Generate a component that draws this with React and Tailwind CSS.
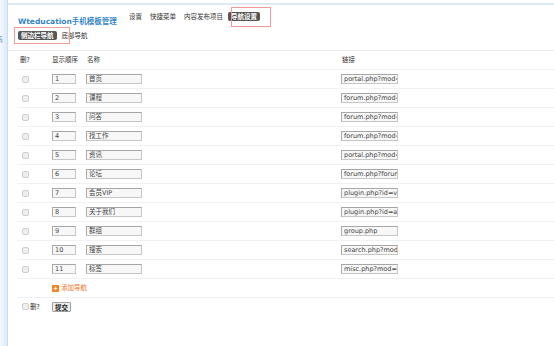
import React from 'react'

const CJK = '"Noto Sans CJK SC", "DejaVu Sans", sans-serif'
const LAT = '"DejaVu Sans", "Noto Sans CJK SC", sans-serif'

const rows = [
  { order: '1', name: '首页', link: 'portal.php?mod=index' },
  { order: '2', name: '课程', link: 'forum.php?mod=index' },
  { order: '3', name: '问答', link: 'forum.php?mod=forumdisplay' },
  { order: '4', name: '找工作', link: 'forum.php?mod=forumdisplay' },
  { order: '5', name: '资讯', link: 'portal.php?mod=list' },
  { order: '6', name: '论坛', link: 'forum.php?forumlist=1' },
  { order: '7', name: '会员VIP', link: 'plugin.php?id=vip' },
  { order: '8', name: '关于我们', link: 'plugin.php?id=about' },
  { order: '9', name: '群组', link: 'group.php' },
  { order: '10', name: '搜索', link: 'search.php?mod=forum' },
  { order: '11', name: '标签', link: 'misc.php?mod=tag' },
]

function Box() {
  return <span className="block w-[7px] h-[7px] rounded-[2px] border border-[#cfcfcf] bg-[#eeeeee]" />
}

function Field({ w, value }) {
  return (
    <div
      className={`${w} h-[10px] border border-[#c6c6c6] border-t-[#a6a6a6] border-l-[#aaaaaa] bg-[#f7f7f7] overflow-hidden whitespace-nowrap text-[6.5px] leading-[8px] pl-[2px] text-[#444]`}
      style={{ fontFamily: LAT }}
    >
      {value}
    </div>
  )
}

function Pill({ children }) {
  return (
    <span className="relative inline-block bg-[#555] text-white font-bold rounded-[2px] px-[3px] h-[9px] leading-[9px] text-[6.5px]">
      {children}
    </span>
  )
}

export default function App() {
  return (
    <div className="flex w-[554px] h-[346px] bg-white overflow-hidden text-[#333]" style={{ fontFamily: CJK }}>
      {/* side strip */}
      <div className="w-[8px] shrink-0 bg-gradient-to-r from-[#f4f9fe] to-[#dbeaf7] border-r border-[#c9def0] overflow-hidden pt-[35px]">
        <span className="block -ml-[4px] text-[7px] leading-[8px] text-[#4f87bd]">系</span>
      </div>

      <div className="flex-1 mt-[3px] border-t-2 border-[#dde9f4]">
        <div className="border-b border-[#e8eef4] h-[46px] pl-[10px]">
          <div className="flex items-center h-[23px]">
            <div className="w-[111px] font-bold text-[#3486c6] whitespace-nowrap">
              <span className="text-[7.5px]" style={{ fontFamily: LAT }}>Wteducation</span>
              <span className="text-[7.5px]">手机模板管理</span>
            </div>
            <div className="flex items-center text-[6.5px] whitespace-nowrap">
              <span className="mr-[8px]">设置</span>
              <span className="mr-[8px]">快捷菜单</span>
              <span className="mr-[5px]">内容发布项目</span>
              <span className="relative">
                <Pill>导航设置</Pill>
                <span className="absolute left-[3px] top-[-5px] w-[40px] h-[20px] border border-[#f29a9a]" />
              </span>
            </div>
          </div>
          <div className="flex items-center h-[15px] text-[6.5px] whitespace-nowrap">
            <span className="relative mr-[5px]">
              <Pill>侧边栏导航</Pill>
              <span className="absolute left-[-4px] top-[-4px] w-[56px] h-[17px] border border-[#f29a9a]" />
            </span>
            <span>底部导航</span>
          </div>
        </div>

        <div className="pl-[9px] text-[6.5px]">
          <div className="flex items-center h-[19px] border-b border-[#eef2f6]">
            <span className="w-[35px] pl-[3px]">删?</span>
            <span className="w-[34px]">显示顺序</span>
            <span className="w-[255px] pl-[1px]">名称</span>
            <span className="pl-[1px]">链接</span>
          </div>
          {rows.map((r) => (
            <div key={r.order} className="flex items-center h-[19px] border-b border-[#eef2f6]">
              <div className="w-[35px] pl-[5px]"><Box /></div>
              <div className="w-[34px]"><Field w="w-[24px]" value={r.order} /></div>
              <div className="w-[255px]"><Field w="w-[56px]" value={r.name} /></div>
              <Field w="w-[57px]" value={r.link} />
            </div>
          ))}
          <div className="flex items-center h-[19px] border-b border-[#eef2f6]">
            <div className="w-[35px]" />
            <span className="w-[7px] h-[7px] bg-[#f5821f] rounded-[1px] flex items-center justify-center text-white text-[7px] leading-none font-bold mr-[2px]">+</span>
            <span className="text-[#f37021]">添加导航</span>
          </div>
          <div className="flex items-center h-[17px]">
            <div className="w-[35px] flex items-center pl-[5px]">
              <Box />
              <span className="ml-[1px]">删?</span>
            </div>
            <span className="w-[19px] h-[10px] border border-[#a0a0a0] bg-[#eeeeee] rounded-[1px] font-bold text-[#222] text-[6.5px] leading-[8px] text-center">提交</span>
          </div>
        </div>
      </div>
    </div>
  )
}
